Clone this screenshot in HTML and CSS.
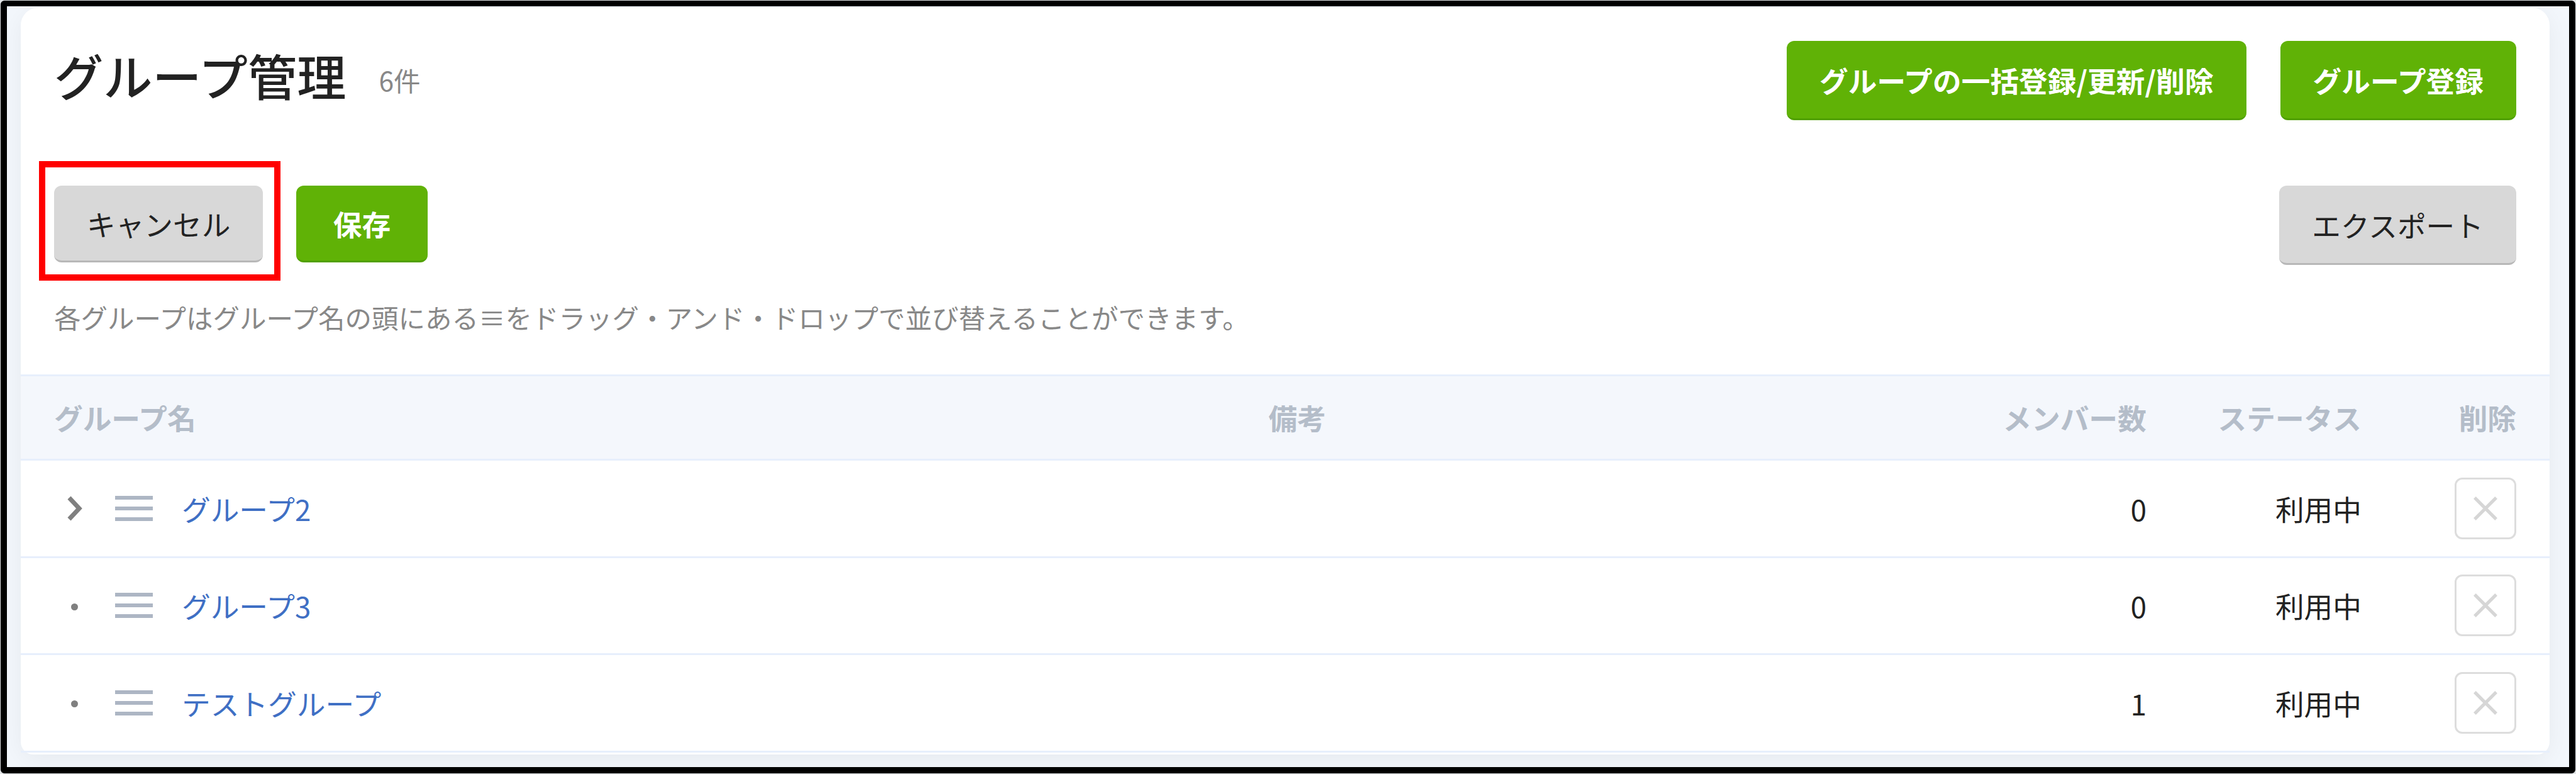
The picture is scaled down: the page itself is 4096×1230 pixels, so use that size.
FILE: index.html
```html
<!DOCTYPE html>
<html lang="ja">

<head>
    <meta charset="UTF-8">
    <meta name="viewport" content="width=device-width, initial-scale=1.0">
    <title>グループ管理</title>
    <link rel="stylesheet" href="styles.css">
</head>

<body>
    <div class="frame">
        <main class="card">
            <header class="page-header">
                <h1>グループ管理</h1>
                <span class="count">6件</span>
                <div class="header-actions">
                    <button class="btn btn-primary">グループの一括登録/更新/削除</button>
                    <button class="btn btn-primary">グループ登録</button>
                </div>
            </header>

            <div class="toolbar">
                <div class="highlight">
                    <button class="btn btn-cancel">キャンセル</button>
                </div>
                <button class="btn btn-primary btn-save">保存</button>
                <button class="btn btn-export">エクスポート</button>
            </div>

            <p class="hint">各グループはグループ名の頭にある≡をドラッグ・アンド・ドロップで並び替えることができます。</p>

            <div class="table">
                <div class="row head">
                    <div>グループ名</div>
                    <div>備考</div>
                    <div class="right">メンバー数</div>
                    <div class="right">ステータス</div>
                    <div class="right">削除</div>
                </div>
                <div class="row">
                    <div class="name">
                        <span class="toggle"><svg class="chevron" viewBox="0 0 26 40"><path d="M4 3 L20 20 L4 37"/></svg></span>
                        <span class="handle"></span>
                        <a href="#">グループ2</a>
                    </div>
                    <div></div>
                    <div class="right">0</div>
                    <div class="right">利用中</div>
                    <div class="right"><button class="delete"><svg viewBox="0 0 40 40"><path d="M2 2 L38 38 M38 2 L2 38"/></svg></button></div>
                </div>
                <div class="row">
                    <div class="name">
                        <span class="toggle"><i class="dot"></i></span>
                        <span class="handle"></span>
                        <a href="#">グループ3</a>
                    </div>
                    <div></div>
                    <div class="right">0</div>
                    <div class="right">利用中</div>
                    <div class="right"><button class="delete"><svg viewBox="0 0 40 40"><path d="M2 2 L38 38 M38 2 L2 38"/></svg></button></div>
                </div>
                <div class="row">
                    <div class="name">
                        <span class="toggle"><i class="dot"></i></span>
                        <span class="handle"></span>
                        <a href="#">テストグループ</a>
                    </div>
                    <div></div>
                    <div class="right">1</div>
                    <div class="right">利用中</div>
                    <div class="right"><button class="delete"><svg viewBox="0 0 40 40"><path d="M2 2 L38 38 M38 2 L2 38"/></svg></button></div>
                </div>
            </div>
        </main>
    </div>
</body>

</html>
```

FILE: styles.css
```css
* {
    box-sizing: border-box;
}

body {
    margin: 0;
    padding: 1px;
    height: 1230px;
    background-color: #e3e6e8;
    color: #222;
    font-family: "Noto Sans CJK JP", "Noto Sans", sans-serif;
    font-size: 45.7px;
    line-height: 1.5;
}

.frame {
    height: 1228px;
    padding: 2px 31px 0 22px;
    border: 10px solid #000;
    border-top-width: 9px;
    border-radius: 6px;
    background-color: #f3f7fc;
    overflow: hidden;
}

.card {
    height: 1187px;
    padding-top: 53px;
    border-radius: 28px 28px 20px 20px;
    background-color: #fff;
    box-shadow: 0 8px 44px rgba(0, 0, 0, 0.06);
}

.page-header {
    display: flex;
    height: 126px;
    padding: 0 53px;
}

h1 {
    margin: 0;
    font-size: 78.2px;
    font-weight: 500;
    line-height: 109px;
}

.count {
    margin-left: 52px;
    color: #888;
    font-size: 42.5px;
    line-height: 124px;
}

.header-actions {
    display: flex;
    gap: 54px;
    margin-left: auto;
}

.btn {
    height: 126px;
    padding: 0 52px;
    border: none;
    border-bottom: 3px solid #b8b8b8;
    border-radius: 12px;
    background-color: #d8d8d8;
    color: #222;
    font-family: inherit;
    font-size: 45.7px;
    white-space: nowrap;
}

.btn-primary {
    border-bottom-color: #50a000;
    background-color: #60b206;
    color: #fff;
    font-weight: bold;
}

.toolbar {
    display: flex;
    align-items: flex-start;
    height: 190px;
    margin-top: 65px;
    padding: 0 53px 0 29px;
}

.highlight {
    width: 384px;
    height: 190px;
    padding: 29px 14px;
    border: 10px solid #f00;
}

.btn-cancel {
    display: block;
    height: 122px;
}

.btn-save {
    width: 209px;
    height: 122px;
    margin: 39px 0 0 25px;
}

.btn-export {
    margin: 39px 0 0 auto;
}

.hint {
    height: 149px;
    margin: 0;
    padding: 26px 53px 0;
    color: #888;
    font-size: 42.5px;
    line-height: 64px;
}

.table {
    border-top: 3px solid #e7effc;
}

.row {
    display: grid;
    grid-template-columns: 1931px 1000px 1fr 342px 246px;
    align-items: center;
    height: 154.4px;
    padding: 0 53px;
    border-bottom: 3px solid #e7effc;
}

.row.head {
    height: 134.4px;
    background-color: #f4f7fc;
    color: #b4bdc9;
    font-weight: bold;
}

.right {
    text-align: right;
}

.name {
    display: flex;
    align-items: center;
}

.toggle {
    display: flex;
    justify-content: center;
    width: 65px;
}

.chevron {
    width: 26px;
    height: 40px;
    fill: none;
    stroke: #808080;
    stroke-width: 7;
}

.dot {
    width: 11px;
    height: 11px;
    margin-top: 4px;
    border-radius: 50%;
    background-color: #808080;
}

.handle {
    width: 60px;
    height: 40px;
    margin: 0 46px 0 32px;
    border-top: 6px solid #adb6c4;
    border-bottom: 6px solid #adb6c4;
    background: linear-gradient(#adb6c4, #adb6c4) center / 100% 6px no-repeat;
}

a {
    color: #3f6fc4;
    text-decoration: none;
}

.delete {
    display: inline-flex;
    align-items: center;
    justify-content: center;
    width: 98px;
    height: 98px;
    padding: 0;
    border: 3px solid #ddd;
    border-radius: 12px;
    background-color: #fff;
    vertical-align: middle;
}

.delete svg {
    width: 38px;
    height: 38px;
    fill: none;
    stroke: #d6d6d6;
    stroke-width: 5.5;
}
```
